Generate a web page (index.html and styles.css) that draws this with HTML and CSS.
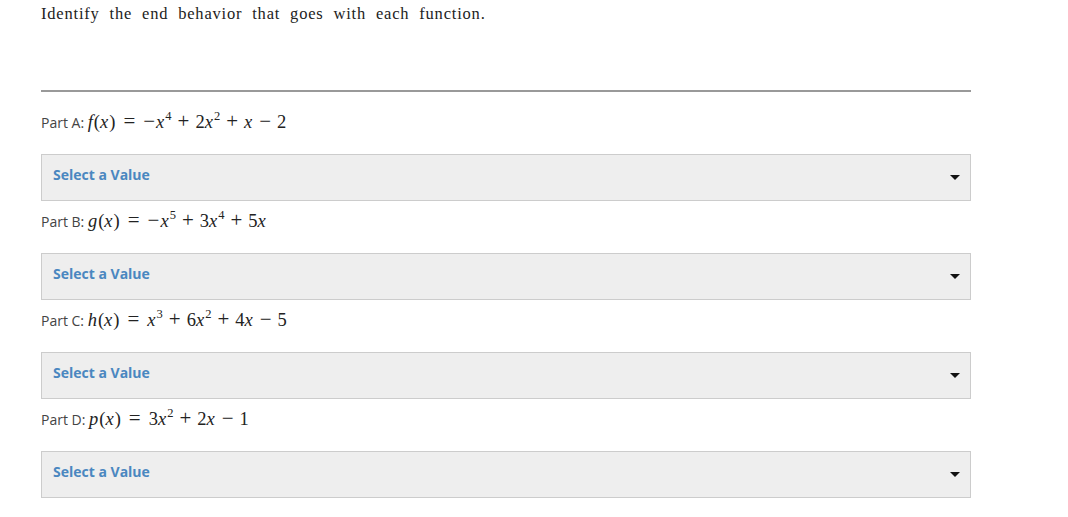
FILE: index.html
```html
<!DOCTYPE html>
<html>
<head>
<meta charset="utf-8">
<link rel="stylesheet" href="styles.css">
</head>
<body>
<div class="page">
  <p class="intro">Identify the end behavior that goes with each function.</p>
  <hr class="rule">
  <div class="part">
    <div class="label">Part A: <span class="math"><i>f</i>(<i>x</i>)<span class="rel">=</span><span class="neg">−</span><i>x</i><sup>4</sup><span class="bin">+</span>2<i>x</i><sup>2</sup><span class="bin">+</span><i>x</i><span class="bin">−</span>2</span></div>
    <div class="select"><span class="placeholder">Select a Value</span><span class="caret"></span></div>
  </div>
  <div class="part">
    <div class="label">Part B: <span class="math"><i>g</i>(<i>x</i>)<span class="rel">=</span><span class="neg">−</span><i>x</i><sup>5</sup><span class="bin">+</span>3<i>x</i><sup>4</sup><span class="bin">+</span>5<i>x</i></span></div>
    <div class="select"><span class="placeholder">Select a Value</span><span class="caret"></span></div>
  </div>
  <div class="part">
    <div class="label">Part C: <span class="math"><i>h</i>(<i>x</i>)<span class="rel">=</span><i>x</i><sup>3</sup><span class="bin">+</span>6<i>x</i><sup>2</sup><span class="bin">+</span>4<i>x</i><span class="bin">−</span>5</span></div>
    <div class="select"><span class="placeholder">Select a Value</span><span class="caret"></span></div>
  </div>
  <div class="part">
    <div class="label">Part D: <span class="math"><i>p</i>(<i>x</i>)<span class="rel">=</span>3<i>x</i><sup>2</sup><span class="bin">+</span>2<i>x</i><span class="bin">−</span>1</span></div>
    <div class="select"><span class="placeholder">Select a Value</span><span class="caret"></span></div>
  </div>
</div>
</body>
</html>
```
FILE: styles.css
```css
html, body { margin: 0; padding: 0; background: #fff; }
.page {
  width: 930px;
  padding-left: 41px;
  font-family: "Open Sans", "Liberation Sans", sans-serif;
  color: #333;
}
.intro {
  margin: 0;
  font-family: "Liberation Serif", serif;
  font-size: 16.5px;
  line-height: 28px;
  word-spacing: 5px;
  letter-spacing: 0.8px;
  color: #222;
}
.rule {
  margin: 62px 0 0 0;
  border: 0;
  height: 2px;
  background: #999;
}
.part { display: flex; flex-direction: column; }
.label {
  margin-top: 19px;
  font-size: 14px;
  line-height: 20px;
  height: 24px;
  color: #444;
  white-space: nowrap;
}
.part + .part .label { margin-top: 9px; }
.math {
  font-family: "Liberation Serif", serif;
  font-size: 18.5px;
  line-height: 1;
  color: #222;
}
.math i { margin-right: 1px; }
.rel, .bin, .neg { font-size: 21px; line-height: 1; }
.rel { margin: 0 8px; }
.bin { margin: 0 6px; }
.neg { margin-right: 1px; }
.math sup { font-size: 12.5px; line-height: 0; vertical-align: 8px; }
.select {
  margin-top: 19px;
  height: 39px;
  border: 1px solid #ccc;
  background: #eee;
  display: flex;
  align-items: center;
  justify-content: space-between;
  padding: 0 10px 6px 11px;
}
.placeholder {
  font-weight: 700;
  font-size: 14px;
  color: #4a87c0;
}
.caret {
  width: 0; height: 0;
  border-left: 5px solid transparent;
  border-right: 5px solid transparent;
  border-top: 5px solid #111;
  margin-top: 6px;
}
```
